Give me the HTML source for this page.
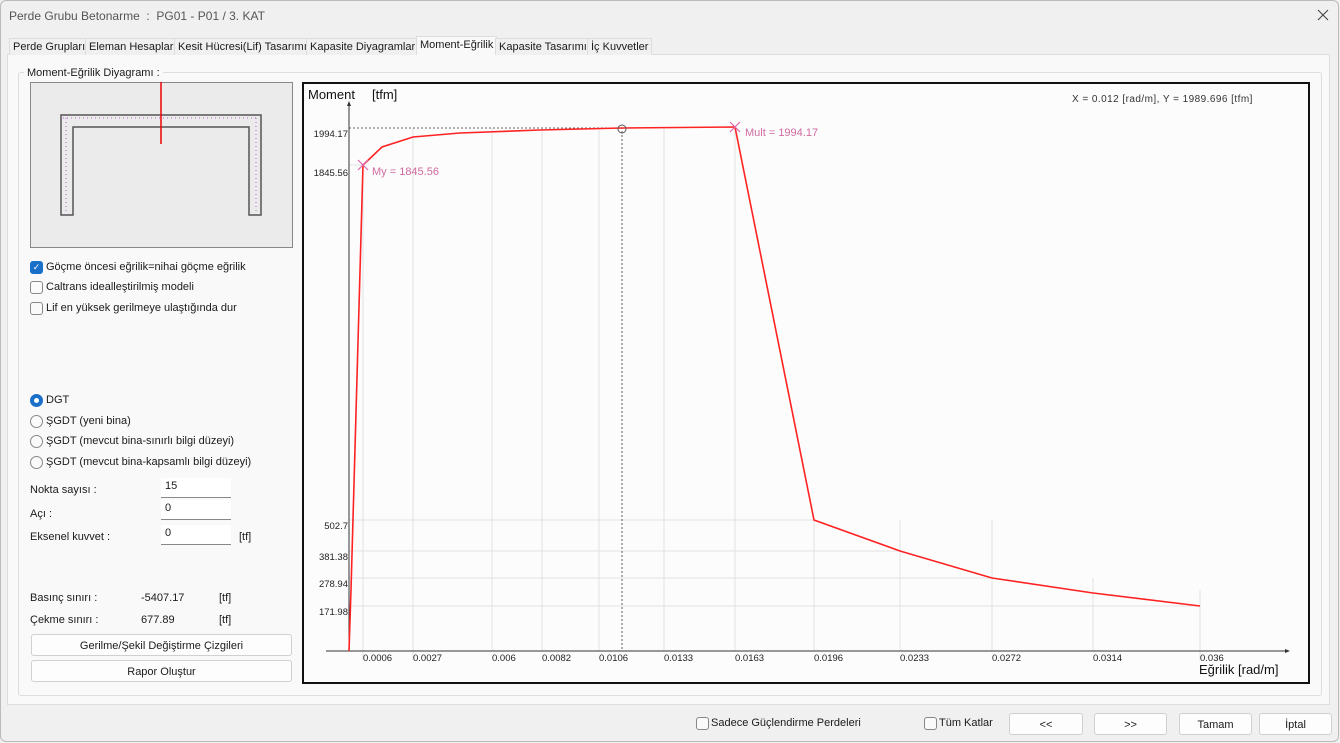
<!DOCTYPE html>
<html><head><meta charset="utf-8"><style>
body{margin:0;width:1340px;height:743px;background:#f0f0f0;font-family:"Liberation Sans",sans-serif;font-size:11px;color:#1a1a1a;position:relative;overflow:hidden}
.a{position:absolute}
.tab{position:absolute;top:38px;height:16px;line-height:16px;font-size:11px;background:#f0f0f0;border:1px solid #ddd;border-bottom:none;padding:0 3px}
.cb{position:absolute;width:11px;height:11px;border:1px solid #888;border-radius:3px;background:#fafafa}
.rb{position:absolute;width:11px;height:11px;border:1px solid #888;border-radius:50%;background:#fafafa}
.in{position:absolute;width:70px;height:20px;background:#fff;border-bottom:1px solid #888;font-size:11px;line-height:16px;padding-left:4px;box-sizing:border-box}
.btn{position:absolute;height:22px;background:#fdfdfd;border:1px solid #d0d0d0;border-radius:3px;text-align:center;line-height:22px;font-size:11px;box-sizing:border-box}
</style></head><body>
<div class="a" style="left:0;top:0;width:1339px;height:742px;border:1px solid #bbb;border-radius:6px;box-sizing:border-box"></div>
<div class="a" style="left:9px;top:9px;font-size:12px;color:#555">Perde Grubu Betonarme &nbsp;:&nbsp; PG01 - P01 / 3. KAT</div>
<svg class="a" style="left:1317px;top:9px" width="12" height="12"><path d="M1 1L11 11M11 1L1 11" stroke="#444" stroke-width="1.1"/></svg>
<div class="a" style="left:7px;top:54px;width:1323px;height:651px;background:#f9f9f9;border:1px solid #ddd;box-sizing:border-box"></div>
<div class="tab" style="left:9px">Perde Grupları</div>
<div class="tab" style="left:85px">Eleman Hesapları</div>
<div class="tab" style="left:174px">Kesit Hücresi(Lif) Tasarımı</div>
<div class="tab" style="left:306px">Kapasite Diyagramları</div>
<div class="tab" style="left:416px;top:36px;height:18px;background:#f9f9f9">Moment-Eğrilik</div>
<div class="tab" style="left:495px">Kapasite Tasarımı</div>
<div class="tab" style="left:587px">İç Kuvvetler</div>
<div class="a" style="left:18px;top:72px;width:1302px;height:622px;border:1px solid #ddd;border-radius:3px"></div>
<div class="a" style="left:24px;top:67px;background:#f9f9f9;padding:0 3px">Moment-Eğrilik Diyagramı :</div>
<div class="a" style="left:30px;top:82px;width:263px;height:166px;background:#ebebeb;border:1px solid #888;box-sizing:border-box"></div>
<svg class="a" style="left:30px;top:82px" width="263" height="166">
<path d="M31 133V33H231V133H219V45H43V133Z" fill="none" stroke="#555" stroke-width="1.5"/>
<path d="M33 36H229M36 36V130M226 36V130" stroke="#b6c" stroke-width="1" stroke-dasharray="1 3"/>
<path d="M131 0V62" stroke="#e00" stroke-width="1.5"/></svg>
<div class="cb" style="left:30px;top:261px;background:#1a6fc9;border-color:#1a6fc9;color:#fff;font-size:9px;line-height:11px;text-align:center">✓</div>
<div class="a" style="left:46px;top:261px">Göçme öncesi eğrilik=nihai göçme eğrilik</div>
<div class="cb" style="left:30px;top:281px"></div><div class="a" style="left:46px;top:281px">Caltrans idealleştirilmiş modeli</div>
<div class="cb" style="left:30px;top:302px"></div><div class="a" style="left:46px;top:302px">Lif en yüksek gerilmeye ulaştığında dur</div>
<div class="rb" style="left:30px;top:394px;border:4px solid #1a6fc9;width:5px;height:5px;background:#fff"></div><div class="a" style="left:46px;top:394px">DGT</div>
<div class="rb" style="left:30px;top:415px"></div><div class="a" style="left:46px;top:415px">ŞGDT (yeni bina)</div>
<div class="rb" style="left:30px;top:435px"></div><div class="a" style="left:46px;top:435px">ŞGDT (mevcut bina-sınırlı bilgi düzeyi)</div>
<div class="rb" style="left:30px;top:456px"></div><div class="a" style="left:46px;top:456px">ŞGDT (mevcut bina-kapsamlı bilgi düzeyi)</div>
<div class="a" style="left:30px;top:484px">Nokta sayısı :</div><div class="in" style="left:161px;top:478px">15</div>
<div class="a" style="left:30px;top:508px">Açı :</div><div class="in" style="left:161px;top:500px">0</div>
<div class="a" style="left:30px;top:531px">Eksenel kuvvet :</div><div class="in" style="left:161px;top:525px">0</div><div class="a" style="left:239px;top:531px">[tf]</div>
<div class="a" style="left:30px;top:592px">Basınç sınırı :</div><div class="a" style="left:141px;top:592px">-5407.17</div><div class="a" style="left:219px;top:592px">[tf]</div>
<div class="a" style="left:30px;top:614px">Çekme sınırı :</div><div class="a" style="left:141px;top:614px">677.89</div><div class="a" style="left:219px;top:614px">[tf]</div>
<div class="btn" style="left:31px;top:634px;width:261px">Gerilme/Şekil Değiştirme Çizgileri</div>
<div class="btn" style="left:31px;top:660px;width:261px">Rapor Oluştur</div>
<svg class="a" style="left:302px;top:82px;font-family:'Liberation Sans',sans-serif" width="1009" height="603" viewBox="302 82 1009 603">
<rect x="303" y="83" width="1006" height="600" fill="#fcfcfc" stroke="#111" stroke-width="2"/>
<g stroke="#e2e2e2" stroke-width="1">
<path d="M363 165V660M413 128V660M492 128V651M542 128V651M599 128V651M664 128V651M735 128V651M814 520V651M900 520V651M992 520V651M1093 578V651M1200 590V660"/>
<path d="M349 520H814M349 551H900M349 578H992M349 606H1200M349 165H363"/></g>
<path d="M349 128H622V651" stroke="#333" stroke-width="0.8" stroke-dasharray="2 2" fill="none"/>
<path d="M349 102V651M326 651H1288" stroke="#333" stroke-width="1"/>
<path d="M347 106L349 101L351 106ZM1285 649L1290 651L1285 653Z" fill="#333"/>
<polyline points="349,651 351,590 363,165 382,147 413,137 460,133 540,130 622,128 735,127 814,520 900,551 992,578 1093,593 1200,606" fill="none" stroke="#f22" stroke-width="1.6"/>
<circle cx="622" cy="129" r="4" fill="none" stroke="#555"/>
<path d="M358 160L368 170M368 160L358 170M730 122L740 132M740 122L730 132" stroke="#d6a" stroke-width="1.2"/>
<g fill="#d06aa0" font-size="11"><text x="372" y="175">My = 1845.56</text><text x="745" y="136">Mult = 1994.17</text></g>
<text x="308" y="99" font-size="13" fill="#111">Moment</text><text x="372" y="99" font-size="13" fill="#111">[tfm]</text>
<text x="1072" y="102" font-size="10" fill="#333" letter-spacing="0.45">X = 0.012 [rad/m],  Y = 1989.696 [tfm]</text>
<g font-size="9.5" fill="#222" text-anchor="end"><text x="348" y="137">1994.17</text><text x="348" y="176">1845.56</text><text x="348" y="529">502.7</text><text x="348" y="560">381.38</text><text x="348" y="587">278.94</text><text x="348" y="615">171.98</text></g>
<g font-size="9.5" fill="#222"><text x="363" y="661">0.0006</text><text x="413" y="661">0.0027</text><text x="492" y="661">0.006</text><text x="542" y="661">0.0082</text><text x="599" y="661">0.0106</text><text x="664" y="661">0.0133</text><text x="735" y="661">0.0163</text><text x="814" y="661">0.0196</text><text x="900" y="661">0.0233</text><text x="992" y="661">0.0272</text><text x="1093" y="661">0.0314</text><text x="1200" y="661">0.036</text></g>
<text x="1199" y="674" font-size="13" fill="#111">Eğrilik [rad/m]</text>
</svg>
<div class="cb" style="left:696px;top:717px"></div><div class="a" style="left:711px;top:717px">Sadece Güçlendirme Perdeleri</div>
<div class="cb" style="left:924px;top:717px"></div><div class="a" style="left:939px;top:717px">Tüm Katlar</div>
<div class="btn" style="left:1009px;top:713px;width:74px">&lt;&lt;</div>
<div class="btn" style="left:1094px;top:713px;width:73px">&gt;&gt;</div>
<div class="btn" style="left:1179px;top:713px;width:73px">Tamam</div>
<div class="btn" style="left:1259px;top:713px;width:73px">İptal</div>
</body></html>
